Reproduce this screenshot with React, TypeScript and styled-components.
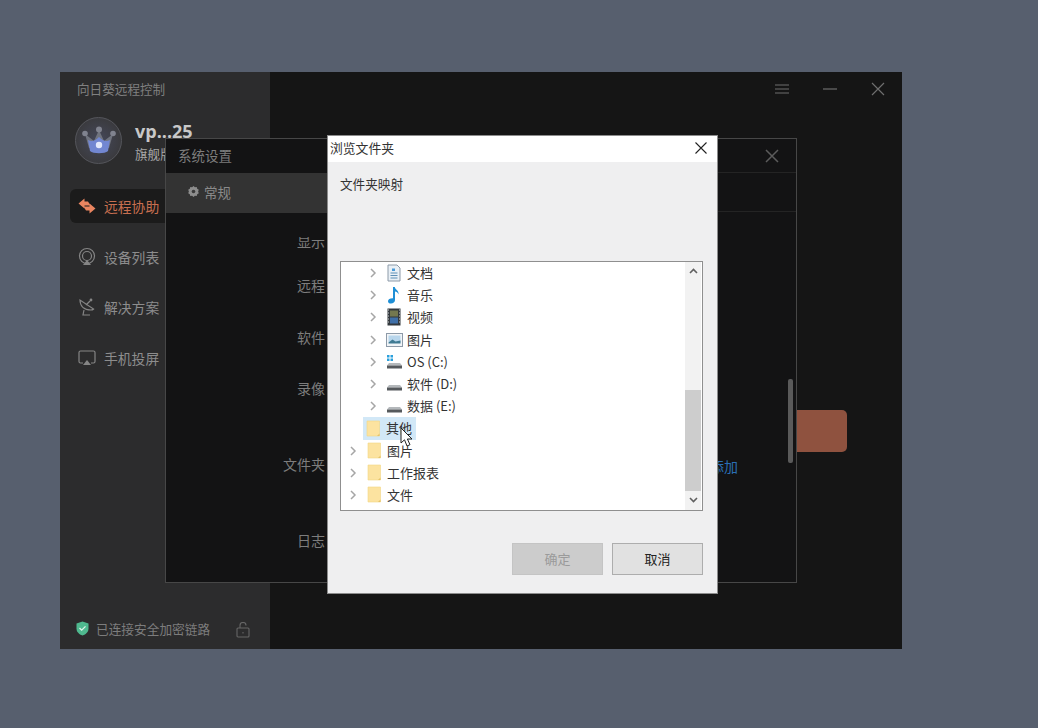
import React from 'react';
import styled, { createGlobalStyle } from 'styled-components';

const CJK = `"Noto Sans CJK SC", "Liberation Sans", sans-serif`;

const GlobalStyle = createGlobalStyle`
  html, body {
    margin: 0;
    padding: 0;
    width: 100%;
    height: 100%;
    background: #575f6e;
    overflow: hidden;
  }
  * { box-sizing: border-box; }
`;

const navItems = [
  { label: '远程协助', icon: 'swap', active: true },
  { label: '设备列表', icon: 'device' },
  { label: '解决方案', icon: 'dish' },
  { label: '手机投屏', icon: 'cast' },
];

const formRows = [
  { label: '显示', top: 92, left: 131, clipped: true },
  { label: '远程', top: 136, left: 131 },
  { label: '软件', top: 188, left: 131 },
  { label: '录像', top: 239, left: 131 },
  { label: '文件夹', top: 315, left: 117 },
  { label: '日志', top: 391, left: 131 },
];

const treeItems = [
  { label: '文档', icon: 'doc', depth: 1, arrow: true },
  { label: '音乐', icon: 'music', depth: 1, arrow: true },
  { label: '视频', icon: 'video', depth: 1, arrow: true },
  { label: '图片', icon: 'picture', depth: 1, arrow: true },
  { label: 'OS (C:)', icon: 'os', depth: 1, arrow: true },
  { label: '软件 (D:)', icon: 'drive', depth: 1, arrow: true },
  { label: '数据 (E:)', icon: 'drive', depth: 1, arrow: true },
  { label: '其他', icon: 'folder', depth: 0, selected: true },
  { label: '图片', icon: 'folder', depth: 0, arrow: true },
  { label: '工作报表', icon: 'folder', depth: 0, arrow: true },
  { label: '文件', icon: 'folder', depth: 0, arrow: true },
];

const NavIcon = ({ name }: { name: string }) => {
  if (name === 'swap') {
    return (
      <svg width="20" height="18" viewBox="0 0 20 18">
        <path d="M1.500 6.500L7.500 1.500v3h3.500l2.500 4H7.500v3z" fill="#ea8560" />
        <path d="M18.500 11.500L12.500 16.500v-3H9l-2.500-4h6v-3z" fill="#ea8560" />
      </svg>
    );
  }
  if (name === 'device') {
    return (
      <svg width="20" height="20" viewBox="0 0 20 20" fill="none" stroke="#858585" strokeWidth="1.200">
        <circle cx="10" cy="9" r="7.500" />
        <circle cx="10" cy="9" r="4.500" />
        <path d="M6 18h8l-4-5z" fill="#858585" stroke="none" />
      </svg>
    );
  }
  if (name === 'dish') {
    return (
      <svg width="20" height="20" viewBox="0 0 20 20" fill="none" stroke="#858585" strokeWidth="1.200">
        <path d="M3 3c0 6 4 10 11 10 1 0 2-.4 2.600-1z" />
        <path d="M9 8l4-4" />
        <circle cx="14" cy="3" r="1.400" fill="#858585" stroke="none" />
        <path d="M7 13l-1 5h7" />
      </svg>
    );
  }
  return (
    <svg width="20" height="20" viewBox="0 0 20 20" fill="none" stroke="#858585" strokeWidth="1.200">
      <path d="M6 15H3.500A1.500 1.500 0 0 1 2 13.500v-9A1.500 1.500 0 0 1 3.500 3h13A1.500 1.500 0 0 1 18 4.500v9a1.500 1.500 0 0 1-1.500 1.500H14" />
      <path d="M6 17h8l-4-5z" fill="#858585" stroke="none" />
    </svg>
  );
};

const TreeIcon = ({ name }: { name: string }) => {
  if (name === 'folder') {
    return (
      <svg width="15" height="17" viewBox="0 0 15 17">
        <path d="M1 1h12.500v15H1z" fill="#fce3a0" stroke="#f2d684" strokeWidth="0.600" />
        <path d="M11 16l2.500-2.500V16z" fill="#e5c46a" />
      </svg>
    );
  }
  if (name === 'doc') {
    return (
      <svg width="14" height="18" viewBox="0 0 14 18">
        <path d="M1 1h9l3 3v13H1z" fill="#e9f0f6" stroke="#8d9aa8" />
        <path d="M5 4.500h3v2.500H5z" fill="#4a9bd8" />
        <path d="M3.500 9h7M3.500 11.500h7M3.500 14h7" stroke="#5f8fb5" strokeWidth="1.100" />
      </svg>
    );
  }
  if (name === 'music') {
    return (
      <svg width="14" height="18" viewBox="0 0 14 18">
        <path d="M6 1h1.800c.3 2.800 4.500 3.500 3.700 7.500-.6-2-2-2.700-3.500-3V14c0 2.300-1.800 3.500-4 3.500-1.800 0-3-.9-3-2.300 0-1.900 2-3.100 5-3z" fill="#1e8fd6" />
      </svg>
    );
  }
  if (name === 'video') {
    return (
      <svg width="14" height="18" viewBox="0 0 14 18">
        <rect x="0.500" y="0.500" width="13" height="17" fill="#33383d" />
        <rect x="3" y="2.500" width="8" height="6" fill="#74784f" />
        <rect x="3" y="9.500" width="8" height="6" fill="#3f6fa8" />
        <path d="M1 2h1M1 5h1M1 8h1M1 11h1M1 14h1M12 2h1M12 5h1M12 8h1M12 11h1M12 14h1" stroke="#c8ccd0" strokeWidth="1" />
      </svg>
    );
  }
  if (name === 'picture') {
    return (
      <svg width="17" height="14" viewBox="0 0 17 14">
        <rect x="0.500" y="0.500" width="16" height="13" fill="#f1f4f7" stroke="#8d9aa8" />
        <rect x="2.500" y="2.500" width="12" height="7" fill="#b8d6ec" />
        <path d="M2.500 9.500l4-3 3 2 5-1v3h-12z" fill="#3f7a93" />
      </svg>
    );
  }
  return (
    <svg width="17" height="14" viewBox="0 0 17 14">
      {name === 'os' && <path d="M1 0h2.500v2.500H1zM4.500 0H7v2.500H4.500zM1 3.500h2.500V6H1zM4.500 3.500H7V6H4.500z" fill="#2aa0dc" />}
      <path d="M3 8h11l2 2.500H1z" fill="#b4b8bb" />
      <rect x="1" y="10.500" width="15" height="3" fill="#55595c" />
    </svg>
  );
};

const App = () => (
  <>
    <GlobalStyle />
    <Desktop>
      <RemoteWindow>
        <Sidebar>
          <AppTitle>向日葵远程控制</AppTitle>
          <Profile>
            <Avatar>
              <svg width="34" height="30" viewBox="0 0 34 30">
                <path d="M3 8l9 7 5-11 5 11 9-7-4 14H7z" fill="#70747f" />
                <circle cx="17" cy="3.500" r="3" fill="#80838f" />
                <circle cx="3" cy="7.500" r="2.800" fill="#80838f" />
                <circle cx="31" cy="7.500" r="2.800" fill="#80838f" />
                <path d="M6 14c4 2 7 1 11-3 4 4 7 5 11 3l-2 11c-3 3-15 3-18 0z" fill="#7287d2" />
                <circle cx="17" cy="19" r="3.200" fill="#e3e9fc" />
              </svg>
            </Avatar>
            <ProfileText>
              <UserName>vp...25</UserName>
              <Plan>旗舰版</Plan>
            </ProfileText>
          </Profile>
          <Nav>
            {navItems.map(item => (
              <NavItem key={item.label} $active={item.active}>
                <NavIcon name={item.icon} />
                {item.label}
              </NavItem>
            ))}
          </Nav>
          <Status>
            <svg width="13" height="15" viewBox="0 0 13 15">
              <path d="M6.500 0.500l6 2v5c0 3.500-2.500 5.800-6 7-3.500-1.200-6-3.500-6-7v-5z" fill="#4fb98f" />
              <path d="M3.500 7l2.200 2.200 3.800-3.800" fill="none" stroke="#dff5ec" strokeWidth="1.300" />
            </svg>
            <StatusText>已连接安全加密链路</StatusText>
            <LockIcon width="14" height="16" viewBox="0 0 14 16" fill="none" stroke="#666" strokeWidth="1.100">
              <rect x="1" y="6" width="12" height="9" rx="1" />
              <path d="M4 6V3.500a3 3 0 0 1 6 0" />
              <path d="M7 10v1.500" />
            </LockIcon>
          </Status>
        </Sidebar>
        <MainPane>
          <WindowControls>
            <svg width="14" height="12" viewBox="0 0 14 12" stroke="#6e6e6e" strokeWidth="1.200">
              <path d="M0 2h14M0 6h14M0 10h14" />
            </svg>
            <svg width="14" height="12" viewBox="0 0 14 12" stroke="#6e6e6e" strokeWidth="1.200">
              <path d="M0 6h14" />
            </svg>
            <svg width="14" height="14" viewBox="0 0 14 14" stroke="#6e6e6e" strokeWidth="1.200">
              <path d="M1 1l12 12M13 1L1 13" />
            </svg>
          </WindowControls>
          <ActionButton />
        </MainPane>
      </RemoteWindow>

      <SettingsDialog>
        <SettingsSide>
          <SettingsTitle>系统设置</SettingsTitle>
          <SettingsTab>
            <svg width="11" height="11" viewBox="0 0 11 11">
              <path d="M5.500 0l1.400 1.200 1.800-.2.500 1.800 1.600 1-.7 1.700.7 1.700-1.600 1-.5 1.800-1.800-.2L5.500 11 4.100 9.800l-1.800.2-.5-1.800-1.600-1 .7-1.700-.7-1.700 1.600-1 .5-1.800 1.800.2z" fill="#8d8d8d" />
              <circle cx="5.500" cy="5.500" r="1.800" fill="#3a3a3a" />
            </svg>
            常规
          </SettingsTab>
        </SettingsSide>
        <SettingsBody>
          <SettingsHead>
            <svg width="14" height="14" viewBox="0 0 14 14" stroke="#5c5c5c" strokeWidth="1.500">
              <path d="M1 1l12 12M13 1L1 13" />
            </svg>
          </SettingsHead>
          <SettingsStrip />
        </SettingsBody>
        {formRows.map(row => (
          <FormLabel key={row.top} $top={row.top} $left={row.left} $clipped={row.clipped}>
            {row.label}
          </FormLabel>
        ))}
        <AddLink>添加</AddLink>
        <SettingsScroll />
      </SettingsDialog>

      <BrowseDialog>
        <BrowseTitleBar>
          浏览文件夹
          <svg width="12" height="12" viewBox="0 0 12 12" stroke="#222" strokeWidth="1.100">
            <path d="M0.500 0.500l11 11M11.500 0.500l-11 11" />
          </svg>
        </BrowseTitleBar>
        <BrowseBody>
          <BrowseHint>文件夹映射</BrowseHint>
          <TreeBox>
            <TreeList>
              {treeItems.map((item, i) => (
                <TreeRow key={i} $depth={item.depth}>
                  <Chevron>
                    {item.arrow && (
                      <svg width="7" height="10" viewBox="0 0 7 10" fill="none" stroke="#a6a6a6" strokeWidth="1.500">
                        <path d="M1 1l4 4-4 4" />
                      </svg>
                    )}
                  </Chevron>
                  <TreeItem $selected={item.selected}>
                    <TreeIconSlot>
                      <TreeIcon name={item.icon} />
                    </TreeIconSlot>
                    <TreeLabel>{item.label}</TreeLabel>
                  </TreeItem>
                </TreeRow>
              ))}
            </TreeList>
            <ScrollTrack>
              <ScrollArrow>
                <svg width="9" height="6" viewBox="0 0 9 6" fill="none" stroke="#606060" strokeWidth="1.600">
                  <path d="M1 5l3.500-3.500L8 5" />
                </svg>
              </ScrollArrow>
              <ScrollGap />
              <ScrollThumb />
              <ScrollArrow>
                <svg width="9" height="6" viewBox="0 0 9 6" fill="none" stroke="#606060" strokeWidth="1.600">
                  <path d="M1 1l3.500 3.500L8 1" />
                </svg>
              </ScrollArrow>
            </ScrollTrack>
          </TreeBox>
          <ButtonRow>
            <DialogButton $disabled>确定</DialogButton>
            <DialogButton>取消</DialogButton>
          </ButtonRow>
        </BrowseBody>
        <Cursor>
          <svg width="15" height="21" viewBox="0 0 15 21">
            <path d="M1 1v15l3.500-3.200L7 19l3-1.300-2.600-5.700H12z" fill="#fff" stroke="#222" strokeWidth="1" />
          </svg>
        </Cursor>
      </BrowseDialog>
    </Desktop>
  </>
);

export default App;

const Desktop = styled.div`
  position: relative;
  width: 1038px;
  height: 728px;
  background: #575f6e;
  font-family: ${CJK};
  overflow: hidden;
`;

const RemoteWindow = styled.div`
  position: absolute;
  left: 60px;
  top: 72px;
  width: 842px;
  height: 577px;
  display: flex;
  background: #151515;
`;

const Sidebar = styled.div`
  width: 210px;
  display: flex;
  flex-direction: column;
  background: #2c2c2d;
  padding: 8px 0 0 10px;
`;

const AppTitle = styled.div`
  font-size: 12.6px;
  line-height: 17px;
  color: #808080;
  padding-left: 7px;
`;

const Profile = styled.div`
  display: flex;
  align-items: center;
  gap: 13px;
  margin: 20px 0 0 5px;
`;

const Avatar = styled.div`
  width: 47px;
  height: 47px;
  border-radius: 50%;
  border: 1px solid #55565c;
  background: radial-gradient(circle at 50% 50%, #45485a, #3a3a3d 75%);
  display: flex;
  align-items: center;
  justify-content: center;
`;

const ProfileText = styled.div`
  display: flex;
  flex-direction: column;
  margin-top: 1px;
`;

const UserName = styled.div`
  font-family: "Open Sans", "Liberation Sans", sans-serif;
  font-size: 18px;
  font-weight: 700;
  line-height: 22px;
  color: #c8c8c8;
`;

const Plan = styled.div`
  font-size: 12.6px;
  line-height: 17px;
  margin-top: 3px;
  color: #a8a8a8;
`;

const Nav = styled.div`
  display: flex;
  flex-direction: column;
  gap: 16.6px;
  margin-top: 25px;
`;

const NavItem = styled.div<{ $active?: boolean }>`
  height: 34px;
  width: 190px;
  display: flex;
  align-items: center;
  gap: 7px;
  padding-left: 7px;
  border-radius: 6px;
  font-size: 13.8px;
  color: ${props => props.$active ? '#c86f50' : '#8d8d8d'};
  background: ${props => props.$active ? '#1b1b1b' : 'transparent'};
`;

const Status = styled.div`
  margin-top: auto;
  height: 44px;
  display: flex;
  align-items: center;
  padding: 2px 0 0 6px;
  gap: 7px;
`;

const StatusText = styled.div`
  font-size: 12.7px;
  color: #7d7d7d;
  width: 133px;
  white-space: nowrap;
`;

const LockIcon = styled.svg`
  margin-top: 3px;
`;

const MainPane = styled.div`
  position: relative;
  flex: 1;
`;

const WindowControls = styled.div`
  display: flex;
  align-items: center;
  justify-content: flex-end;
  gap: 34px;
  height: 34px;
  padding-right: 17px;
`;

const ActionButton = styled.div`
  position: absolute;
  left: 505px;
  top: 338px;
  width: 72px;
  height: 42px;
  border-radius: 5px;
  background: #8f523f;
`;

const SettingsDialog = styled.div`
  position: absolute;
  left: 165px;
  top: 138px;
  width: 632px;
  height: 445px;
  display: flex;
  background: #131314;
  border: 1px solid #474747;
`;

const SettingsSide = styled.div`
  width: 162px;
  display: flex;
  flex-direction: column;
`;

const SettingsTitle = styled.div`
  height: 34px;
  padding: 7px 0 0 12px;
  font-size: 13.5px;
  line-height: 18px;
  color: #7d7d7d;
`;

const SettingsTab = styled.div`
  height: 40px;
  display: flex;
  align-items: center;
  gap: 5px;
  padding: 0 0 3px 22px;
  background: #333333;
  font-size: 13.5px;
  color: #8a8a8a;
`;

const SettingsBody = styled.div`
  flex: 1;
  display: flex;
  flex-direction: column;
`;

const SettingsHead = styled.div`
  height: 34px;
  display: flex;
  align-items: center;
  justify-content: flex-end;
  padding-right: 17px;
  border-bottom: 1px solid #242424;
`;

const SettingsStrip = styled.div`
  height: 39px;
  border-bottom: 1px solid #242424;
`;

const FormLabel = styled.div<{ $top: number; $left: number; $clipped?: boolean }>`
  position: absolute;
  top: ${props => props.$top}px;
  left: ${props => props.$left}px;
  font-size: 14px;
  line-height: 20px;
  color: #7d7d7d;
  white-space: nowrap;
  clip-path: ${props => props.$clipped ? 'inset(6px 0 0 0)' : 'none'};
`;

const AddLink = styled.div`
  position: absolute;
  left: 544px;
  top: 317px;
  font-size: 14px;
  line-height: 20px;
  color: #2a6fb5;
`;

const SettingsScroll = styled.div`
  position: absolute;
  left: 622px;
  top: 240px;
  width: 5px;
  height: 84px;
  border-radius: 2px;
  background: #5a5a5a;
`;

const BrowseDialog = styled.div`
  position: absolute;
  left: 327px;
  top: 135px;
  width: 391px;
  height: 459px;
  display: flex;
  flex-direction: column;
  background: #efeff0;
  border: 1px solid #8c8c8c;
`;

const BrowseTitleBar = styled.div`
  height: 26px;
  display: flex;
  align-items: center;
  justify-content: space-between;
  padding: 0 10px 3px 2px;
  background: #fff;
  font-size: 12.8px;
  color: #333;
`;

const BrowseBody = styled.div`
  flex: 1;
  display: flex;
  flex-direction: column;
  padding: 0 14px 0 12px;
`;

const BrowseHint = styled.div`
  height: 99px;
  padding-top: 13px;
  font-size: 12.6px;
  line-height: 17px;
  color: #333;
`;

const TreeBox = styled.div`
  height: 250px;
  display: flex;
  background: #fff;
  border: 1px solid #8f8f8f;
  overflow: hidden;
`;

const TreeList = styled.div`
  flex: 1;
`;

const TreeRow = styled.div<{ $depth: number }>`
  height: 22.2px;
  display: flex;
  align-items: center;
  padding-left: ${props => props.$depth * 20 + 9}px;
`;

const Chevron = styled.div`
  width: 14px;
  display: flex;
  justify-content: flex-start;
`;

const TreeItem = styled.div<{ $selected?: boolean }>`
  height: 100%;
  display: flex;
  align-items: center;
  gap: 4px;
  padding: 0 ${props => props.$selected ? '4px' : '1px'} 0 1px;
  font-size: 13px;
  color: #333;
  margin-left: ${props => props.$selected ? '-1px' : '0'};
  background: ${props => props.$selected ? '#d2e8f7' : 'transparent'};
`;

const TreeLabel = styled.span`
  margin-top: -1px;
`;

const TreeIconSlot = styled.div`
  width: 18px;
  display: flex;
  justify-content: center;
`;

const ScrollTrack = styled.div`
  width: 16px;
  margin-right: 1px;
  padding-bottom: 2px;
  display: flex;
  flex-direction: column;
  background: #f2f2f2;
`;

const ScrollArrow = styled.div`
  height: 17px;
  display: flex;
  align-items: center;
  justify-content: center;
`;

const ScrollGap = styled.div`
  height: 111px;
`;

const ScrollThumb = styled.div`
  flex: 1;
  background: #cdcdcd;
`;

const ButtonRow = styled.div`
  display: flex;
  justify-content: flex-end;
  gap: 9px;
  margin-top: 32px;
`;

const DialogButton = styled.div<{ $disabled?: boolean }>`
  width: 91px;
  height: 32px;
  display: flex;
  align-items: center;
  justify-content: center;
  padding-bottom: 2px;
  font-size: 13px;
  color: ${props => props.$disabled ? '#9a9a9a' : '#222'};
  background: ${props => props.$disabled ? '#cccccc' : '#e1e1e1'};
  border: 1px solid ${props => props.$disabled ? '#c4c4c4' : '#adadad'};
`;

const Cursor = styled.div`
  position: absolute;
  left: 72px;
  top: 291px;
  line-height: 0;
`;
